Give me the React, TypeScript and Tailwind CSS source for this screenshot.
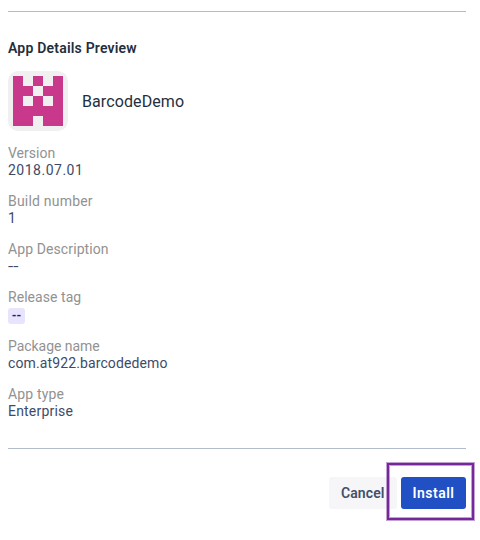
const pixels = ["10101", "11011", "10101", "11111", "11011"];

const Avatar = () => (
  <svg className="size-[60px] shrink-0" viewBox="0 0 60 60" shapeRendering="crispEdges">
    <rect width="60" height="60" rx="10" fill="#f0f0f0" shapeRendering="auto" />
    {pixels.map((row, y) =>
      row.split("").map((cell, x) =>
        cell === "1" ? (
          <rect key={`${x}-${y}`} x={5 + x * 10} y={5 + y * 10} width="10" height="10" fill="#c8398b" />
        ) : null,
      ),
    )}
  </svg>
);

type Field = { label: string; value: string; labelClass: string; valueClass: string; tag?: boolean };

const fields: Field[] = [
  { label: "Version", value: "2018.07.01", labelClass: "", valueClass: "tracking-[0.5px]" },
  { label: "Build number", value: "1", labelClass: "tracking-[0.2px]", valueClass: "" },
  { label: "App Description", value: "--", labelClass: "tracking-[0.1px]", valueClass: "inline-block origin-left scale-x-[1.35]" },
  { label: "Release tag", value: "--", labelClass: "tracking-[0.05px]", valueClass: "", tag: true },
  { label: "Package name", value: "com.at922.barcodedemo", labelClass: "-tracking-[0.05px]", valueClass: "tracking-[0.12px]" },
  { label: "App type", value: "Enterprise", labelClass: "tracking-[0.15px]", valueClass: "tracking-[0.2px]" },
];

export default function App() {
  return (
    <div className="h-[540px] w-[480px] overflow-hidden bg-white pl-2 pr-[14px] pt-[11px] font-['Roboto',sans-serif] text-[14px] leading-[17px] text-[#3d4b68]">
      <hr className="border-t border-[#b3bccb]" />
      <h2 className="mt-[27px] h-5 text-[14px] font-semibold leading-[18px] text-[#1f2f40]">
        <span className="tracking-[0.2px]">App Details Preview</span>
      </h2>
      <div className="mt-3 flex items-center gap-[14px]">
        <Avatar />
        <span className="pt-0.5 text-[16px] leading-5 tracking-[0.1px] text-[#1f2f40]">BarcodeDemo</span>
      </div>
      <dl className="mt-[14px] flex flex-col gap-[14px]">
        {fields.map((f) => (
          <div key={f.label}>
            <dt className="text-[#929292]"><span className={f.labelClass}>{f.label}</span></dt>
            {f.tag ? (
              <dd className="flex h-[18px] items-end">
                <span className="flex h-4 w-[17px] items-center justify-center rounded-[3px] bg-[#e8e4fd] pb-px text-[12px] font-bold leading-3 text-[#2e1a78]">{f.value}</span>
              </dd>
            ) : (
              <dd className="h-[17px]"><span className={f.valueClass}>{f.value}</span></dd>
            )}
          </div>
        ))}
      </dl>
      <hr className="mt-[28px] border-t border-[#b3bccb]" />
      <div className="mt-7 flex justify-end gap-1">
        <button className="h-8 w-[68px] rounded-[3px] bg-[#f6f6f9] pl-3 text-left font-semibold tracking-[0.1px] text-[#42506a]">Cancel</button>
        <div className="relative">
          <button className="h-8 w-[65px] rounded-[3px] bg-[#2050c4] font-semibold tracking-[0.5px] text-white">Install</button>
          <div className="pointer-events-none absolute -left-[14px] -top-[14px] h-[57px] w-[87px] border-2 border-[#76289b] shadow-[0_0_0_1px_#76289b70,inset_0_0_0_1px_#76289b70]" />
        </div>
      </div>
    </div>
  );
}
